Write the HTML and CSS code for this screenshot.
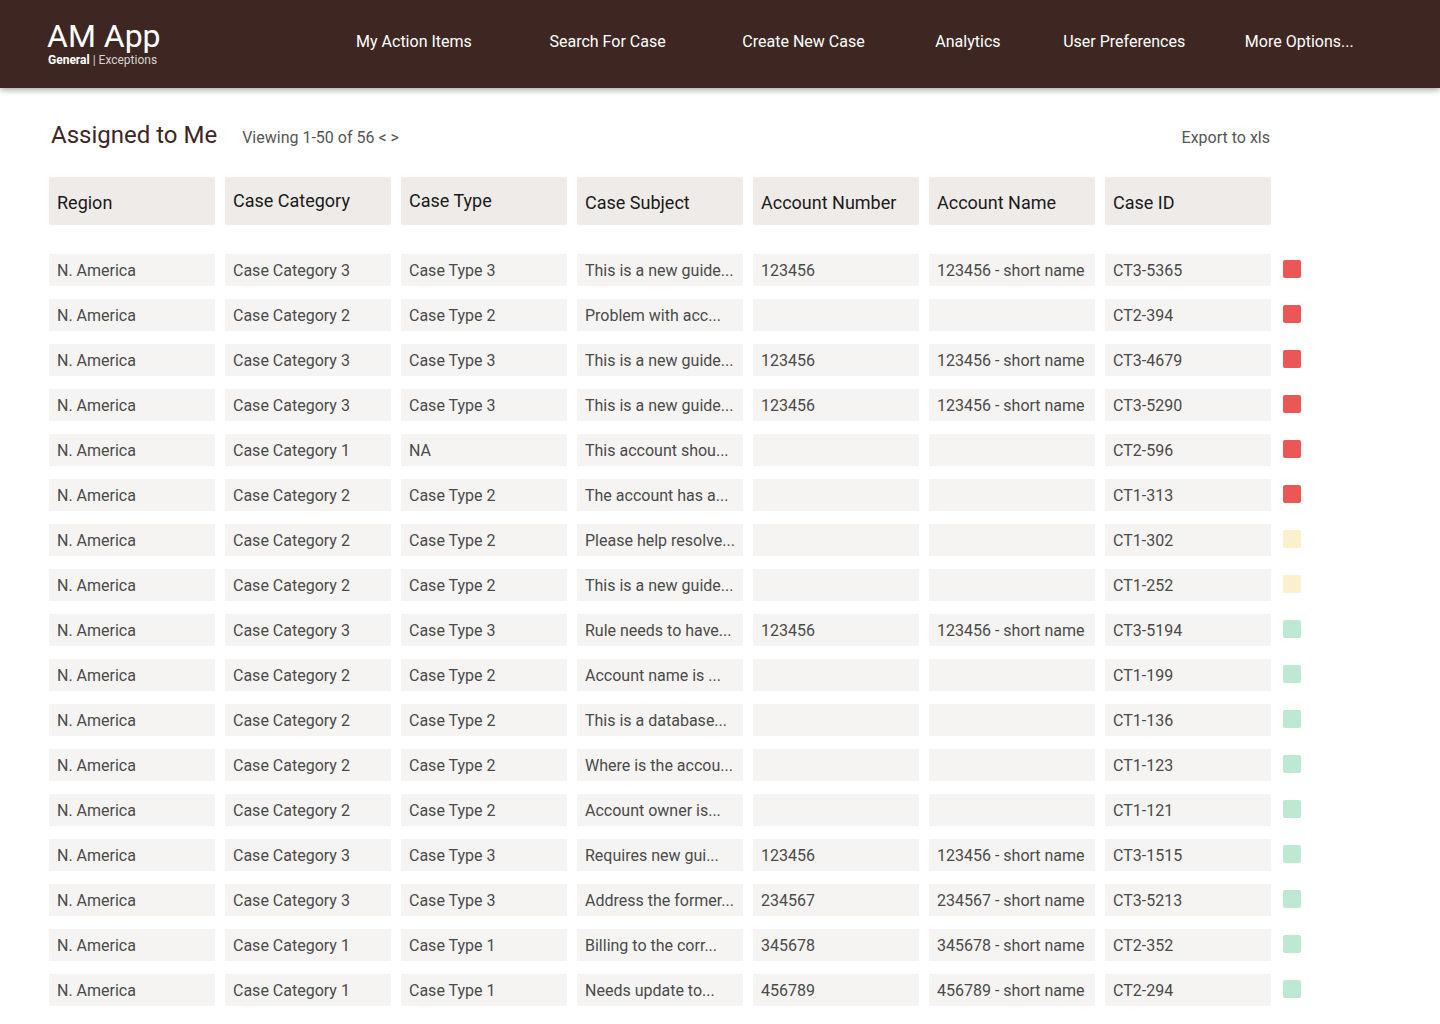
FILE: index.html
```html
<!DOCTYPE html>
<html lang="en">
<head>
<meta charset="utf-8">
<title>AM App</title>
<link rel="stylesheet" href="styles.css">
</head>
<body>
<header class="topbar">
  <div class="brand">
    <div class="brand-name">AM App</div>
    <div class="brand-sub"><b>General</b> | Exceptions</div>
  </div>
  <nav class="nav">
    <a class="nav-item n1">My Action Items</a>
    <a class="nav-item n2">Search For Case</a>
    <a class="nav-item n3">Create New Case</a>
    <a class="nav-item n4">Analytics</a>
    <a class="nav-item n5">User Preferences</a>
    <a class="nav-item n6">More Options...</a>
  </nav>
</header>
<main class="content">
  <div class="titlebar">
    <h1 class="title">Assigned to Me</h1>
    <span class="viewing">Viewing 1-50 of 56 &lt; &gt;</span>
    <span class="export">Export to xls</span>
  </div>
  <div class="table">
    <div class="row head">
      <div class="cell">Region</div>
      <div class="cell up">Case Category</div>
      <div class="cell up">Case Type</div>
      <div class="cell">Case Subject</div>
      <div class="cell">Account Number</div>
      <div class="cell">Account Name</div>
      <div class="cell">Case ID</div>
    </div>
    <div class="body">
      <div class="row"><div class="cell">N. America</div><div class="cell">Case Category 3</div><div class="cell">Case Type 3</div><div class="cell">This is a new guide...</div><div class="cell">123456</div><div class="cell">123456 - short name</div><div class="cell">CT3-5365</div><span class="status red"></span></div>
      <div class="row"><div class="cell">N. America</div><div class="cell">Case Category 2</div><div class="cell">Case Type 2</div><div class="cell">Problem with acc...</div><div class="cell"></div><div class="cell"></div><div class="cell">CT2-394</div><span class="status red"></span></div>
      <div class="row"><div class="cell">N. America</div><div class="cell">Case Category 3</div><div class="cell">Case Type 3</div><div class="cell">This is a new guide...</div><div class="cell">123456</div><div class="cell">123456 - short name</div><div class="cell">CT3-4679</div><span class="status red"></span></div>
      <div class="row"><div class="cell">N. America</div><div class="cell">Case Category 3</div><div class="cell">Case Type 3</div><div class="cell">This is a new guide...</div><div class="cell">123456</div><div class="cell">123456 - short name</div><div class="cell">CT3-5290</div><span class="status red"></span></div>
      <div class="row"><div class="cell">N. America</div><div class="cell">Case Category 1</div><div class="cell">NA</div><div class="cell">This account shou...</div><div class="cell"></div><div class="cell"></div><div class="cell">CT2-596</div><span class="status red"></span></div>
      <div class="row"><div class="cell">N. America</div><div class="cell">Case Category 2</div><div class="cell">Case Type 2</div><div class="cell">The account has a...</div><div class="cell"></div><div class="cell"></div><div class="cell">CT1-313</div><span class="status red"></span></div>
      <div class="row"><div class="cell">N. America</div><div class="cell">Case Category 2</div><div class="cell">Case Type 2</div><div class="cell">Please help resolve...</div><div class="cell"></div><div class="cell"></div><div class="cell">CT1-302</div><span class="status yellow"></span></div>
      <div class="row"><div class="cell">N. America</div><div class="cell">Case Category 2</div><div class="cell">Case Type 2</div><div class="cell">This is a new guide...</div><div class="cell"></div><div class="cell"></div><div class="cell">CT1-252</div><span class="status yellow"></span></div>
      <div class="row"><div class="cell">N. America</div><div class="cell">Case Category 3</div><div class="cell">Case Type 3</div><div class="cell">Rule needs to have...</div><div class="cell">123456</div><div class="cell">123456 - short name</div><div class="cell">CT3-5194</div><span class="status green"></span></div>
      <div class="row"><div class="cell">N. America</div><div class="cell">Case Category 2</div><div class="cell">Case Type 2</div><div class="cell">Account name is ...</div><div class="cell"></div><div class="cell"></div><div class="cell">CT1-199</div><span class="status green"></span></div>
      <div class="row"><div class="cell">N. America</div><div class="cell">Case Category 2</div><div class="cell">Case Type 2</div><div class="cell">This is a database...</div><div class="cell"></div><div class="cell"></div><div class="cell">CT1-136</div><span class="status green"></span></div>
      <div class="row"><div class="cell">N. America</div><div class="cell">Case Category 2</div><div class="cell">Case Type 2</div><div class="cell">Where is the accou...</div><div class="cell"></div><div class="cell"></div><div class="cell">CT1-123</div><span class="status green"></span></div>
      <div class="row"><div class="cell">N. America</div><div class="cell">Case Category 2</div><div class="cell">Case Type 2</div><div class="cell">Account owner is...</div><div class="cell"></div><div class="cell"></div><div class="cell">CT1-121</div><span class="status green"></span></div>
      <div class="row"><div class="cell">N. America</div><div class="cell">Case Category 3</div><div class="cell">Case Type 3</div><div class="cell">Requires new gui...</div><div class="cell">123456</div><div class="cell">123456 - short name</div><div class="cell">CT3-1515</div><span class="status green"></span></div>
      <div class="row"><div class="cell">N. America</div><div class="cell">Case Category 3</div><div class="cell">Case Type 3</div><div class="cell">Address the former...</div><div class="cell">234567</div><div class="cell">234567 - short name</div><div class="cell">CT3-5213</div><span class="status green"></span></div>
      <div class="row"><div class="cell">N. America</div><div class="cell">Case Category 1</div><div class="cell">Case Type 1</div><div class="cell">Billing to the corr...</div><div class="cell">345678</div><div class="cell">345678 - short name</div><div class="cell">CT2-352</div><span class="status green"></span></div>
      <div class="row last"><div class="cell">N. America</div><div class="cell">Case Category 1</div><div class="cell">Case Type 1</div><div class="cell">Needs update to...</div><div class="cell">456789</div><div class="cell">456789 - short name</div><div class="cell">CT2-294</div><span class="status green"></span></div>
    </div>
  </div>
</main>
</body>
</html>
```

FILE: styles.css
```css
* { box-sizing: border-box; }
html, body { margin: 0; padding: 0; }
body {
  font-family: Roboto, "Liberation Sans", Arial, sans-serif;
  background: #ffffff;
  color: #4a4a4a;
  width: 1440px;
  height: 1024px;
  overflow: hidden;
}

.topbar {
  height: 88px;
  background: #3e2723;
  display: flex;
  align-items: flex-start;
  box-shadow: 0 2px 6px rgba(0, 0, 0, 0.35);
  position: relative;
  z-index: 1;
}
.brand {
  margin-left: 47px;
  padding-top: 19px;
  color: #ffffff;
}
.brand-name {
  font-size: 32px;
  line-height: 34px;
  font-weight: 400;
}
.brand-sub {
  font-size: 12px;
  line-height: 14px;
  color: #d8d2cf;
  margin-left: 1px;
}
.brand-sub b { color: #ffffff; font-weight: 700; }

.nav {
  display: flex;
  margin-left: 195.5px;
  padding-top: 32px;
}
.nav-item {
  color: #ffffff;
  font-size: 16px;
  line-height: 20px;
  white-space: nowrap;
}
.n2 { margin-left: 77.7px; }
.n3 { margin-left: 76.7px; }
.n4 { margin-left: 70.7px; }
.n5 { margin-left: 62.7px; }
.n6 { margin-left: 59.7px; }

.content {
  padding: 32px 0 0 49px;
}
.titlebar {
  display: flex;
  align-items: center;
  width: 1221px;
  height: 30px;
}
.title {
  margin: 0 0 0 2px;
  font-size: 24px;
  font-weight: 400;
  color: #3e2723;
  line-height: 30px;
}
.viewing {
  margin-left: 25px;
  margin-top: 4px;
  font-size: 16px;
  color: #555555;
}
.export {
  margin-left: auto;
  margin-top: 4px;
  font-size: 16px;
  color: #555555;
}

.table { margin-top: 27px; }
.row {
  display: grid;
  grid-template-columns: repeat(7, 166px) 18px;
  column-gap: 10px;
  align-items: center;
}
.row.head { height: 48px; }
.head .cell {
  height: 48px;
  background: #efebe8;
  color: #1a1a1a;
  font-size: 18px;
  padding-top: 3px;
}
.head .cell.up { padding-top: 0; padding-bottom: 2px; }

.body {
  margin-top: 29px;
  display: flex;
  flex-direction: column;
  gap: 13px;
}
.cell {
  height: 32px;
  background: #f5f4f2;
  display: flex;
  align-items: center;
  padding-left: 8px;
  font-size: 16px;
  color: #4a4a4a;
  white-space: nowrap;
  overflow: hidden;
}
.status {
  width: 18px;
  height: 18px;
  border-radius: 2px;
  margin-left: 2px;
  margin-top: -3px;
}
.red { background: #eb5757; }
.yellow { background: #fbf0cd; }
.green { background: #bde8d1; }
```
